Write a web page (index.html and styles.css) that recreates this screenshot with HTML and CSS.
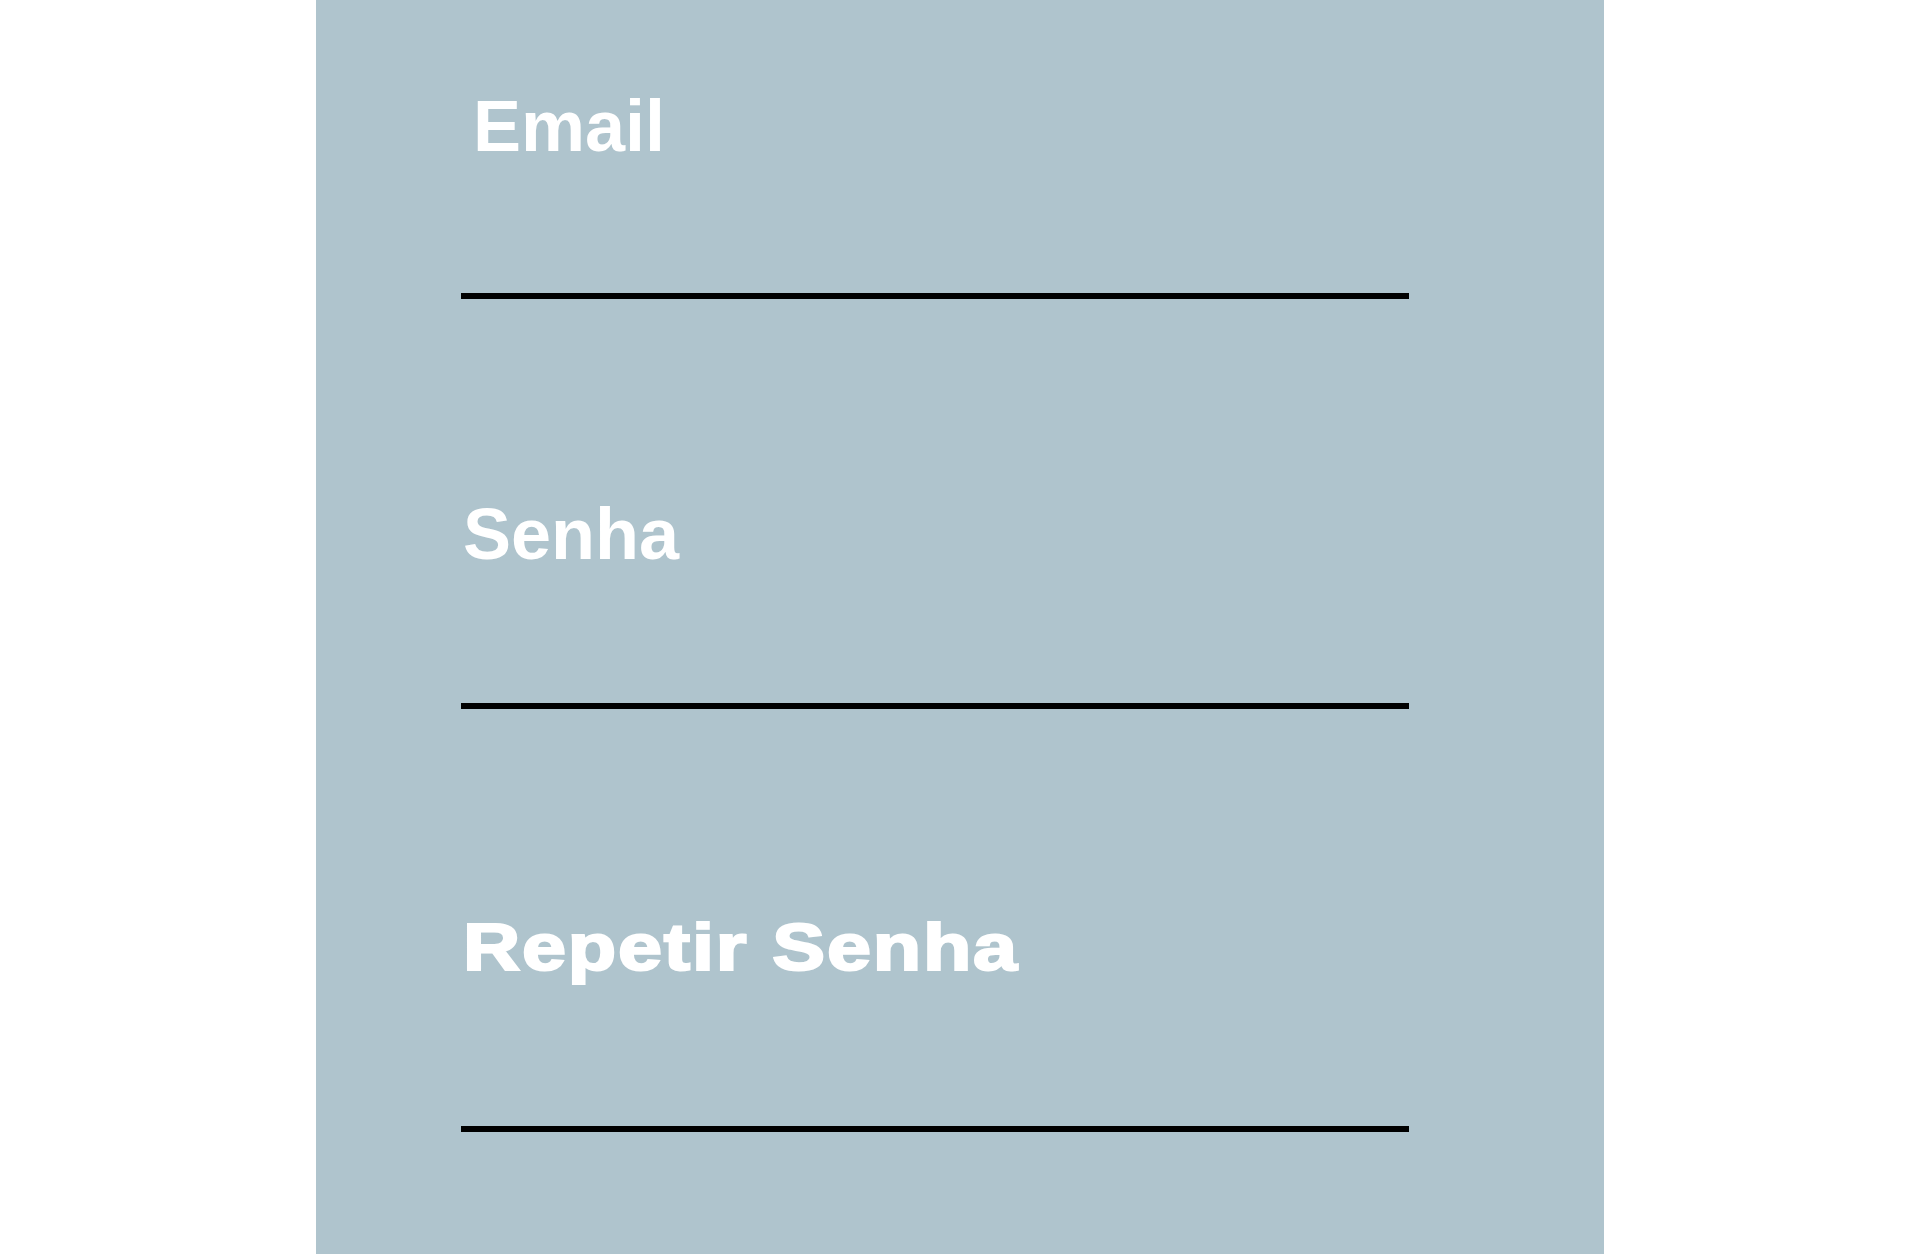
FILE: index.html
```html
<!DOCTYPE html>
<html lang="pt">
<head>
<meta charset="utf-8">
<title>Cadastro</title>
<link rel="stylesheet" href="styles.css">
</head>
<body>
<main class="panel">
  <form class="form">
    <div class="field field-email">
      <label class="label label-email" for="email">Email</label>
      <input class="input input-email" id="email" type="text">
    </div>
    <div class="field field-senha">
      <label class="label label-senha" for="senha">Senha</label>
      <input class="input input-senha" id="senha" type="password">
    </div>
    <div class="field field-repetir">
      <label class="label label-repetir" for="repetir">Repetir Senha</label>
      <input class="input input-repetir" id="repetir" type="password">
    </div>
  </form>
</main>
</body>
</html>
```
FILE: styles.css
```css
html, body {
  margin: 0;
  padding: 0;
  background: #ffffff;
  height: 100%;
}
body {
  font-family: "Liberation Sans", Arial, sans-serif;
  overflow: hidden;
}
.panel {
  margin-left: 316px;
  width: 1288px;
  min-height: 1254px;
  background: #afc4cd;
  box-sizing: border-box;
  padding-left: 145px;
}
.form {
  display: flex;
  flex-direction: column;
}
.field {
  display: flex;
  flex-direction: column;
}
.field-email { padding-top: 90px; }
.field-senha { margin-top: 199px; }
.field-repetir { margin-top: 202px; }
.label {
  color: #ffffff;
  font-weight: 700;
  font-size: 72px;
  line-height: 72px;
  display: block;
}
.label-email { margin-left: 12px; }
.label-senha { margin-left: 2px; }
.label-repetir {
  margin-left: 1.5px;
  font-size: 66px;
  -webkit-text-stroke: 2.2px #ffffff;
  letter-spacing: 1.5px;
  transform: scaleX(1.2);
  transform-origin: left center;
  white-space: nowrap;
}
.input {
  display: block;
  width: 948px;
  border: 0;
  border-bottom: 6px solid #000000;
  background: transparent;
  padding: 0;
  margin: 0;
  outline: none;
  box-sizing: content-box;
}
.input-email { height: 131px; }
.input-senha { height: 133px; }
.input-repetir { height: 143px; }
```
